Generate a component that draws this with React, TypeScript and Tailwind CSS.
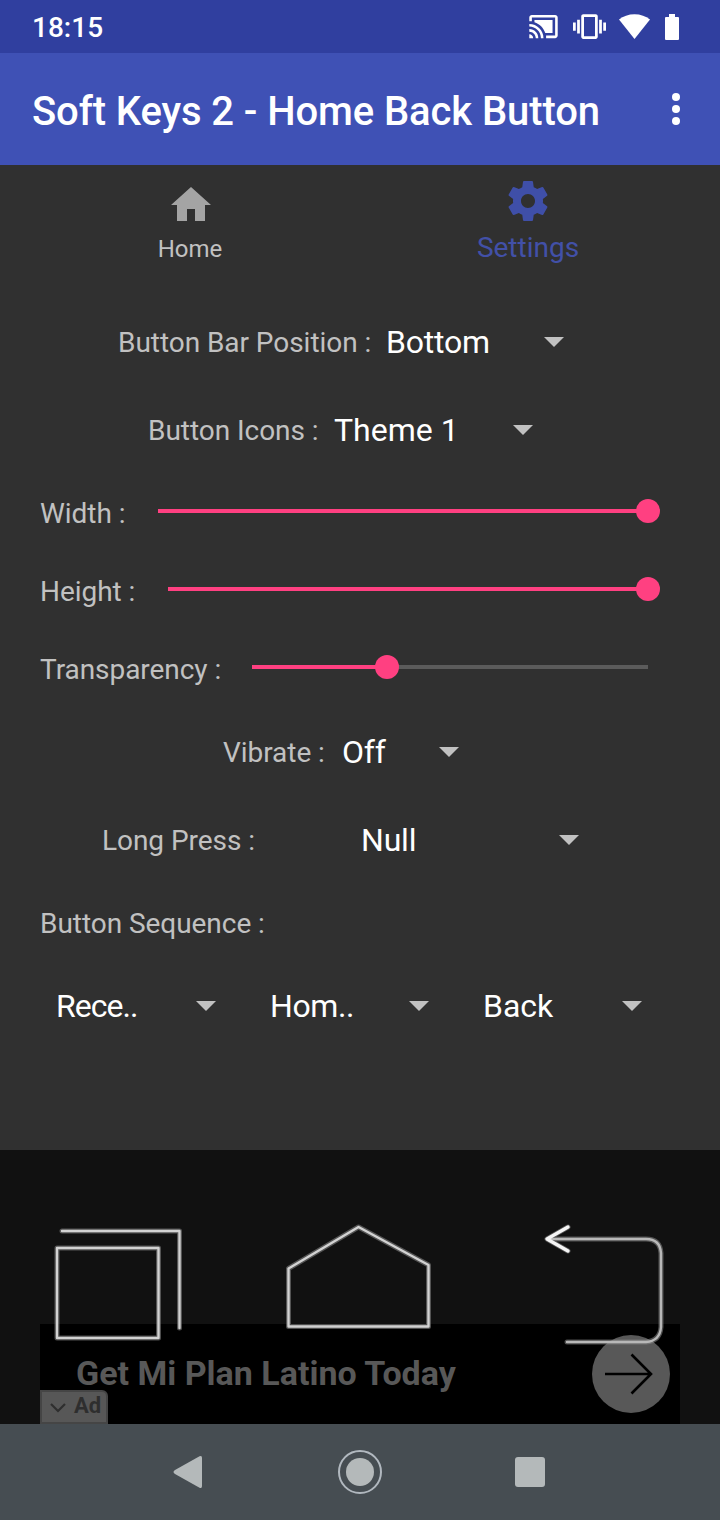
import React from 'react';
import clsx from 'clsx';

const StatusBar: React.FC = () => (
  <div className="flex h-[53px] items-center justify-between bg-[#303f9f] pl-8 pr-[41px] text-white">
    <span className="pt-0.5 text-[28px] font-medium leading-none">18:15</span>
    <div className="flex items-center">
      {/* cast */}
      <svg viewBox="0 0 24 24" className="mr-[14px] h-[31px] w-[31px]" fill="currentColor">
        <path d="M1 18v3h3c0-1.66-1.34-3-3-3zm0-4v2c2.76 0 5 2.24 5 5h2c0-3.87-3.13-7-7-7zm18-7H5v1.63c3.96 1.28 7.09 4.41 8.37 8.37H19V7zM1 10v2c4.97 0 9 4.03 9 9h2c0-6.08-4.93-11-11-11zm20-7H3c-1.1 0-2 .9-2 2v3h2V5h18v14h-7v2h7c1.1 0 2-.9 2-2V5c0-1.1-.9-2-2-2z" />
      </svg>
      {/* vibration */}
      <svg viewBox="0 0 24 24" className="mr-[13px] h-[33px] w-[33px]" fill="currentColor">
        <path d="M0 15h2V9H0v6zm3 2h2V7H3v10zm19-8v6h2V9h-2zm-3 8h2V7h-2v10zM16.5 3h-9C6.67 3 6 3.67 6 4.5v15c0 .83.67 1.5 1.5 1.5h9c.83 0 1.5-.67 1.5-1.5v-15c0-.83-.67-1.5-1.5-1.5zM16 19H8V5h8v14z" />
      </svg>
      {/* wifi */}
      <svg viewBox="0 0 31 25" className="mr-[15px] h-[25px] w-[31px]" fill="currentColor">
        <path d="M15.5 25 0 5.6C4.2 2.2 9.4 0.3 15.5 0.3S26.8 2.2 31 5.6Z" />
      </svg>
      {/* battery */}
      <svg viewBox="0 0 14 26" className="h-[26px] w-[14px]" fill="currentColor">
        <path d="M4 0h6v3h3a1 1 0 0 1 1 1v21a1 1 0 0 1-1 1H1a1 1 0 0 1-1-1V4a1 1 0 0 1 1-1h3z" />
      </svg>
    </div>
  </div>
);

const TitleBar: React.FC = () => (
  <header className="flex h-28 items-center justify-between bg-[#3f51b5] pl-8 pr-10 text-white">
    <h1 className="whitespace-nowrap pt-1.5 text-[40px] font-medium leading-none tracking-[-0.1px]">
      Soft Keys 2 - Home Back Button
    </h1>
    <button className="flex flex-col gap-1" aria-label="More options">
      <span className="size-2 rounded-full bg-white" />
      <span className="size-2 rounded-full bg-white" />
      <span className="size-2 rounded-full bg-white" />
    </button>
  </header>
);

const Tabs: React.FC = () => (
  <nav className="grid h-[133px] grid-cols-2 pl-[21px] pr-[23px]">
    <div className="flex flex-col items-center pt-4 text-[#c1c1c1]">
      <svg viewBox="0 0 24 24" className="ml-0.5 size-12 fill-[#a4a4a4]">
        <path d="M10 20v-6h4v6h5v-8h3L12 3 2 12h3v8z" />
      </svg>
      <span className="mt-2 text-2xl leading-6">Home</span>
    </div>
    <div className="flex flex-col items-center pt-3 text-[#4250a8]">
      <svg viewBox="0 0 24 24" className="size-12 fill-[#3f4fa8]">
        <path d="M19.43 12.98c.04-.32.07-.64.07-.98s-.03-.66-.07-.98l2.11-1.65c.19-.15.24-.42.12-.64l-2-3.46c-.12-.22-.39-.3-.61-.22l-2.49 1c-.52-.4-1.08-.73-1.69-.98l-.38-2.65C14.46 2.18 14.25 2 14 2h-4c-.25 0-.46.18-.49.42l-.38 2.65c-.61.25-1.17.59-1.69.98l-2.49-1c-.23-.09-.49 0-.61.22l-2 3.46c-.13.22-.07.49.12.64l2.11 1.65c-.04.32-.07.65-.07.98s.03.66.07.98l-2.11 1.65c-.19.15-.24.42-.12.64l2 3.46c.12.22.39.3.61.22l2.49-1c.52.4 1.08.73 1.69.98l.38 2.65c.03.24.24.42.49.42h4c.25 0 .46-.18.49-.42l.38-2.65c.61-.25 1.17-.59 1.69-.98l2.49 1c.23.09.49 0 .61-.22l2-3.46c.12-.22.07-.49-.12-.64l-2.11-1.65zM12 15.5c-1.93 0-3.5-1.57-3.5-3.5s1.57-3.5 3.5-3.5 3.5 1.57 3.5 3.5-1.57 3.5-3.5 3.5z" />
      </svg>
      <span className="mt-[9px] text-[28px] leading-7">Settings</span>
    </div>
  </nav>
);

const Label: React.FC<{ children: React.ReactNode; className?: string }> = ({ children, className }) => (
  <span
    className={clsx(
      'shrink-0 whitespace-nowrap pt-0.5 text-[28px] leading-8 tracking-[-0.05px] text-[#c1c1c1]',
      className
    )}
  >
    {children}
  </span>
);

interface SpinnerProps {
  value: string;
  className: string;
  valueClass?: string;
}

const Spinner: React.FC<SpinnerProps> = ({ value, className, valueClass = 'tracking-[-0.2px]' }) => (
  <button className={clsx('flex shrink-0 items-center justify-between text-left', className)}>
    <span className={clsx('whitespace-nowrap text-[32px] leading-9 text-white', valueClass)}>{value}</span>
    <svg viewBox="0 0 20 10" className="h-[10px] w-5 fill-[#c1c1c1]">
      <path d="M0 0h20L10 10z" />
    </svg>
  </button>
);

interface SliderRowProps {
  label: string;
  labelClass: string;
  value: number;
}

const SliderRow: React.FC<SliderRowProps> = ({ label, labelClass, value }) => (
  <div className="flex h-[78px] items-center pl-10 pr-[72px]">
    <Label className={labelClass}>{label}</Label>
    <div className="relative -top-0.5 h-1 flex-1 bg-[#5b5b5b]">
      <div className="h-full bg-[#ff4081]" style={{ width: `${value}%` }} />
      <div
        className="absolute top-1/2 size-6 -translate-x-1/2 -translate-y-1/2 rounded-full bg-[#ff4081]"
        style={{ left: `${value}%` }}
      />
    </div>
  </div>
);

const SettingsPanel: React.FC = () => (
  <main className="h-[852px]">
    <div className="flex h-[88px] items-center pl-[118px]">
      <Label className="w-[268px]">Button Bar Position :</Label>
      <Spinner value="Bottom" className="w-[178px]" />
    </div>
    <div className="flex h-[88px] items-center pl-[148px]">
      <Label className="w-[186px]">Button Icons :</Label>
      <Spinner value="Theme 1" className="w-[199px]" valueClass="tracking-normal" />
    </div>
    <SliderRow label="Width :" labelClass="w-[118px]" value={100} />
    <SliderRow label="Height :" labelClass="w-32" value={100} />
    <SliderRow label="Transparency :" labelClass="w-[212px]" value={34} />
    <div className="flex h-[88px] items-center pl-[223px]">
      <Label className="w-[119px]">Vibrate :</Label>
      <Spinner value="Off" className="w-[117px]" />
    </div>
    <div className="flex h-[88px] items-center pl-[102px]">
      <Label className="w-[259px]">Long Press :</Label>
      <Spinner value="Null" className="w-[218px]" />
    </div>
    <div className="flex h-[78px] items-center pl-10">
      <Label>Button Sequence :</Label>
    </div>
    <div className="flex h-[88px] items-center gap-[54px] pl-14">
      <Spinner value="Rece.." className="w-40" valueClass="tracking-[-0.95px]" />
      <Spinner value="Hom.." className="w-[159px]" valueClass="tracking-[-0.4px]" />
      <Spinner value="Back" className="w-[159px]" valueClass="tracking-normal" />
    </div>
  </main>
);

const AdBanner: React.FC = () => (
  <div className="flex h-[100px] w-[640px] items-start justify-between bg-black pr-[10px] text-[#585858]">
    <div className="flex h-full flex-col justify-between">
      <p className="whitespace-nowrap pl-9 pt-[33px] text-[34px] font-bold leading-8">
        Get Mi Plan Latino Today
      </p>
      <div className="flex h-[34px] w-[68px] shrink-0 items-center gap-2 rounded-tr-md border-2 border-[#454545] bg-[#575757] pl-2 text-[#2e2e2e]">
        <svg viewBox="0 0 16 10" className="mt-0.5 h-[10px] w-4 shrink-0" fill="none" stroke="currentColor" strokeWidth="2.2">
          <path d="M1 1l7 7 7-7" />
        </svg>
        <span className="pb-0.5 text-[22px] font-bold leading-6">Ad</span>
      </div>
    </div>
    <div className="mt-[11px] flex size-[78px] items-center justify-center rounded-full bg-[#585858]">
      <svg viewBox="0 0 78 78" className="size-[78px]" fill="none" stroke="#000" strokeWidth="2.6">
        <path d="M13 39h46M39.5 19.5 59 39 39.5 58.5" />
      </svg>
    </div>
  </div>
);

// the floating soft key bar is drawn on top of whatever is at the bottom
const SoftKeyBar: React.FC = () => (
  <svg
    viewBox="0 0 720 274"
    className="absolute inset-0 h-[274px] w-[720px]"
    fill="none"
    strokeLinejoin="round"
    strokeLinecap="round"
  >
    <g stroke="#8c8c8c" strokeOpacity="0.55" strokeWidth="5">
      <path d="M57 98h101.5v90H57zM62 81h117.5v97" />
      <path d="M288.5 118.5 358.5 77l70 38v61.5h-140z" />
      <path d="M548 89h98q14 0 15 14v74q-1 14-15 15h-79M568 77l-21 12 21 12" />
    </g>
    <g stroke="#d2d2d2" strokeWidth="2.4">
      <path d="M57 98h101.5v90H57zM62 81h117.5v97" />
      <path d="M288.5 118.5 358.5 77l70 38v61.5h-140z" />
      <path d="M548 89h98q14 0 15 14v74q-1 14-15 15h-79" stroke="#b8b8b8" />
      <path d="M568 77l-21 12 21 12" stroke="#f5f5f5" strokeWidth="3.4" />
    </g>
  </svg>
);

const NavigationBar: React.FC = () => (
  <footer className="flex h-24 items-center bg-[#464d52] pl-[173px]">
    <svg viewBox="0 0 30 34" className="h-[34px] w-[30px] fill-[#b4b9ba]">
      <path d="M26.5 1.3Q29 0 29 3V31Q29 34 26.5 32.7L2 19Q-1 17 2 15Z" />
    </svg>
    <div className="ml-[135px] flex size-11 items-center justify-center rounded-full border-2 border-[#b1b8bf]">
      <div className="size-7 rounded-full bg-[#b4b9ba]" />
    </div>
    <div className="ml-[133px] size-[30px] rounded-[3px] bg-[#b4b9ba]" />
  </footer>
);

const App: React.FC = () => {
  return (
    <div className="h-[1520px] w-[720px] overflow-hidden bg-[#303030] font-['Roboto',sans-serif]">
      <StatusBar />
      <TitleBar />
      <Tabs />
      <SettingsPanel />
      <div className="relative flex h-[274px] items-end justify-center bg-[#111111]">
        <AdBanner />
        <SoftKeyBar />
      </div>
      <NavigationBar />
    </div>
  );
};

export default App;
